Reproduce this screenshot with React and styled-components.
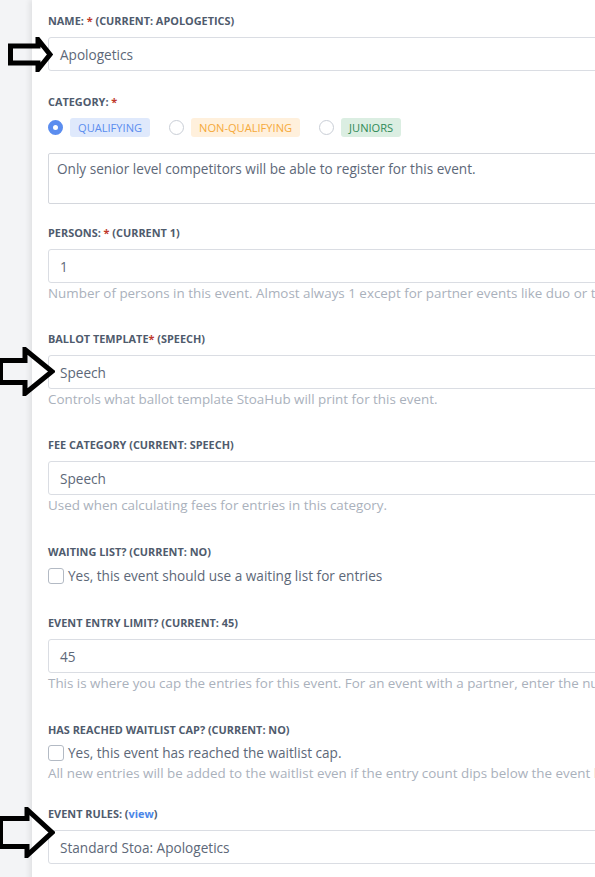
import React from "react";
import styled, { createGlobalStyle } from "styled-components";

const GlobalStyle = createGlobalStyle`
  html, body {
    margin: 0;
    padding: 0;
    background: #ffffff;
    overflow: hidden;
  }
  body {
    font-family: "Open Sans", "Liberation Sans", sans-serif;
  }
`;

const Page = styled.div`
  position: relative;
  display: flex;
  width: 900px;
  min-height: 877px;
`;

const Sidebar = styled.div`
  width: 32px;
  flex-shrink: 0;
  background: #f3f4f6;
`;

const Main = styled.div`
  flex: 1;
  background: #ffffff;
  box-shadow: -3px 0 5px rgba(0, 0, 0, 0.07);
  padding: 14px 0 0 16px;
`;

const Form = styled.div`
  width: 760px;
`;

const Group = styled.div`
  margin-bottom: ${(p) => p.$after || 24}px;
`;

const Label = styled.div`
  font-size: 10.9px;
  line-height: 14px;
  font-weight: 700;
  text-transform: uppercase;
  color: #4f5b6d;
  margin-bottom: ${(p) => p.$gap || 9}px;
`;

const Req = styled.span`
  color: #c0392b;
`;

const ViewLink = styled.a`
  color: #4a86e8;
  text-transform: lowercase;
  text-decoration: none;
`;

const Input = styled.div`
  box-sizing: border-box;
  height: 34px;
  border: 1px solid #dadde3;
  border-radius: 3px;
  padding: 0 11px;
  display: flex;
  align-items: center;
  font-size: 13.6px;
  color: #5d6878;
`;

const TextArea = styled.div`
  box-sizing: border-box;
  height: 51px;
  border: 1px solid #d4d7dd;
  border-radius: 2px;
  padding: 5px 8px;
  font-size: 13.6px;
  line-height: 20px;
  color: #5d6878;
  margin-top: 16px;
`;

const Help = styled.div`
  font-size: 13.4px;
  line-height: 20px;
  color: #aab1bc;
  white-space: nowrap;
`;

const RadioRow = styled.div`
  display: flex;
  align-items: center;
  height: 20px;
`;

const RadioOption = styled.label`
  display: flex;
  align-items: center;
  gap: 7px;
  margin-right: 19px;
`;

const Radio = styled.span`
  box-sizing: border-box;
  width: 15px;
  height: 15px;
  border-radius: 50%;
  border: ${(p) => (p.$checked ? "5px solid #5b8def" : "1px solid #c9ced6")};
  background: #ffffff;
`;

const badgeColors = {
  blue: ["#dfe9fc", "#5b8def"],
  orange: ["#fff0dc", "#f5a93a"],
  green: ["#dbeee2", "#2f8a57"],
};

const Badge = styled.span`
  font-size: 11.1px;
  line-height: 19px;
  padding: 0 8px;
  border-radius: 3px;
  text-transform: uppercase;
  background: ${(p) => badgeColors[p.$tone][0]};
  color: ${(p) => badgeColors[p.$tone][1]};
`;

const CheckRow = styled.label`
  display: flex;
  align-items: center;
  gap: 4px;
  font-size: 13.6px;
  line-height: 20px;
  color: #5d6878;
`;

const Checkbox = styled.span`
  box-sizing: border-box;
  width: 16px;
  height: 16px;
  border: 1px solid #b3bac4;
  border-radius: 3px;
  background: #ffffff;
`;

const Pointer = styled.svg`
  position: absolute;
  left: ${(p) => p.$x}px;
  top: ${(p) => p.$y}px;
`;

const Arrow = ({ x, y, w, h, tail, neck }) => (
  <Pointer $x={x} $y={y} width={w} height={h} viewBox={`0 0 ${w} ${h}`}>
    <polygon
      points={`2.5,${(h - tail) / 2} ${neck},${(h - tail) / 2} ${neck},2.5 ${w - 3},${h / 2} ${neck},${h - 2.5} ${neck},${(h + tail) / 2} 2.5,${(h + tail) / 2}`}
      fill="none"
      stroke="#000"
      strokeWidth="5"
      strokeLinejoin="miter"
    />
  </Pointer>
);

export default function App() {
  return (
    <>
      <GlobalStyle />
      <Page>
        <Sidebar />
        <Main>
          <Form>
            <Group>
              <Label>
                Name: <Req>*</Req> (Current: Apologetics)
              </Label>
              <Input>Apologetics</Input>
            </Group>

            <Group $after={22}>
              <Label $gap={8}>
                Category: <Req>*</Req>
              </Label>
              <RadioRow>
                <RadioOption>
                  <Radio $checked />
                  <Badge $tone="blue">Qualifying</Badge>
                </RadioOption>
                <RadioOption>
                  <Radio />
                  <Badge $tone="orange">Non-Qualifying</Badge>
                </RadioOption>
                <RadioOption>
                  <Radio />
                  <Badge $tone="green">Juniors</Badge>
                </RadioOption>
              </RadioRow>
              <TextArea>
                Only senior level competitors will be able to register for this event.
              </TextArea>
            </Group>

            <Group $after={29}>
              <Label>
                Persons: <Req>*</Req> (Current 1)
              </Label>
              <Input>1</Input>
              <Help>
                Number of persons in this event. Almost always 1 except for partner events like duo or team.
              </Help>
            </Group>

            <Group $after={29}>
              <Label>
                Ballot Template<Req>*</Req> (Speech)
              </Label>
              <Input>Speech</Input>
              <Help>Controls what ballot template StoaHub will print for this event.</Help>
            </Group>

            <Group $after={30}>
              <Label>Fee Category (Current: Speech)</Label>
              <Input>Speech</Input>
              <Help>Used when calculating fees for entries in this category.</Help>
            </Group>

            <Group $after={30}>
              <Label $gap={7}>Waiting List? (Current: No)</Label>
              <CheckRow>
                <Checkbox />
                Yes, this event should use a waiting list for entries
              </CheckRow>
            </Group>

            <Group $after={30}>
              <Label>Event Entry Limit? (Current: 45)</Label>
              <Input>45</Input>
              <Help>
                This is where you cap the entries for this event. For an event with a partner, enter the number of teams.
              </Help>
            </Group>

            <Group $after={24}>
              <Label $gap={6}>Has Reached Waitlist Cap? (Current: No)</Label>
              <CheckRow>
                <Checkbox />
                Yes, this event has reached the waitlist cap.
              </CheckRow>
              <Help>
                All new entries will be added to the waitlist even if the entry count dips below the event limit.
              </Help>
            </Group>

            <Group>
              <Label>
                Event Rules: (<ViewLink href="#">view</ViewLink>)
              </Label>
              <Input>Standard Stoa: Apologetics</Input>
            </Group>
          </Form>
        </Main>

        <Arrow x={8} y={37} w={45} h={35} tail={17} neck={30} />
        <Arrow x={-2} y={347} w={57} h={49} tail={22} neck={27} />
        <Arrow x={-2} y={807} w={57} h={51} tail={28} neck={29} />
      </Page>
    </>
  );
}
